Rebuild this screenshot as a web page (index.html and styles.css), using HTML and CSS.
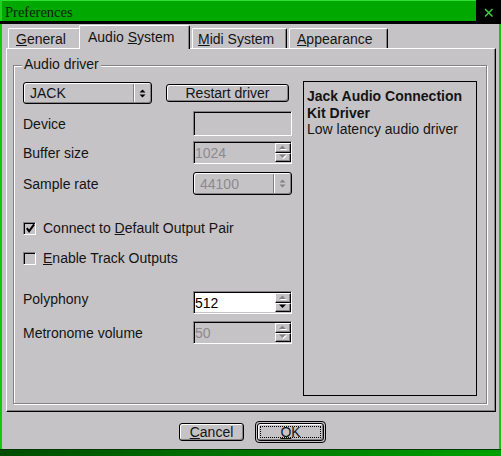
FILE: index.html
```html
<!DOCTYPE html>
<html>
<head>
<meta charset="utf-8">
<title>Preferences</title>
<link rel="stylesheet" href="styles.css">
</head>
<body>
<div class="window">
  <div class="titlebar">
    <div class="title">Preferences</div>
    <div class="close">
      <svg width="25" height="21" viewBox="0 0 25 21"><path d="M9 9 L16.5 16.5 M16.5 9 L9 16.5" stroke="#3fd03f" stroke-width="1.5" fill="none"/></svg>
    </div>
  </div>
  <div class="body">
    <div class="tabs">
      <div class="tab tab-general"><u>G</u>eneral</div>
      <div class="tab tab-audio selected">Audio <u>S</u>ystem</div>
      <div class="tab tab-midi"><u>M</u>idi System</div>
      <div class="tab tab-appearance"><u>A</u>ppearance</div>
    </div>
    <div class="pane">
      <div class="group">
        <div class="legend">Audio driver</div>
        <div class="form">
          <div class="left">
            <div class="row row-driver">
              <div class="combo combo-driver">
                <span class="combo-text">JACK</span>
                <span class="combo-btn">
                  <svg width="7" height="9" viewBox="0 0 7 9"><polygon points="0.5,3.5 3.5,0.5 6.5,3.5" fill="#000"/><polygon points="0.5,5.5 3.5,8.5 6.5,5.5" fill="#000"/></svg>
                </span>
              </div>
              <div class="btn btn-restart">Restart driver</div>
            </div>
            <div class="row row-device">
              <span class="label">Device</span>
              <div class="field"></div>
            </div>
            <div class="row row-buffer">
              <span class="label">Buffer size</span>
              <div class="spin">
                <span class="spin-text dim">1024</span>
                <span class="spin-btns">
                  <span class="spin-btn"><svg width="9" height="6" viewBox="0 0 9 6"><polygon points="1,5 4.5,1.5 8,5" fill="#fff"/><polygon points="0,4 3.5,0.5 7,4" fill="#848284"/></svg></span>
                  <span class="spin-btn"><svg width="9" height="6" viewBox="0 0 9 6"><polygon points="1,1.5 4.5,5 8,1.5" fill="#fff"/><polygon points="0,0.5 3.5,4 7,0.5" fill="#848284"/></svg></span>
                </span>
              </div>
            </div>
            <div class="row row-sample">
              <span class="label">Sample rate</span>
              <div class="combo combo-sample">
                <span class="combo-text dim">44100</span>
                <span class="combo-btn">
                  <svg width="7" height="9" viewBox="0 0 7 9"><polygon points="0.5,3.5 3.5,0.5 6.5,3.5" fill="#848284"/><polygon points="0.5,5.5 3.5,8.5 6.5,5.5" fill="#848284"/></svg>
                </span>
              </div>
            </div>
            <div class="check-row row-connect">
              <span class="checkbox"><svg width="11" height="11" viewBox="0 0 11 11"><polyline points="2,5 4.5,8.5 10,1" fill="none" stroke="#000" stroke-width="2.2"/></svg></span>
              <span>Connect to <u>D</u>efault Output Pair</span>
            </div>
            <div class="check-row row-enable">
              <span class="checkbox"></span>
              <span><u>E</u>nable Track Outputs</span>
            </div>
            <div class="row row-poly">
              <span class="label">Polyphony</span>
              <div class="spin">
                <span class="spin-text white">512</span>
                <span class="spin-btns">
                  <span class="spin-btn"><svg width="9" height="6" viewBox="0 0 9 6"><polygon points="1,5 4.5,1.5 8,5" fill="#fff"/><polygon points="0,4 3.5,0.5 7,4" fill="#848284"/></svg></span>
                  <span class="spin-btn"><svg width="9" height="6" viewBox="0 0 9 6"><polygon points="0,0.5 3.5,4 7,0.5" fill="#000"/></svg></span>
                </span>
              </div>
            </div>
            <div class="row row-metro">
              <span class="label">Metronome volume</span>
              <div class="spin">
                <span class="spin-text dim">50</span>
                <span class="spin-btns">
                  <span class="spin-btn"><svg width="9" height="6" viewBox="0 0 9 6"><polygon points="1,5 4.5,1.5 8,5" fill="#fff"/><polygon points="0,4 3.5,0.5 7,4" fill="#848284"/></svg></span>
                  <span class="spin-btn"><svg width="9" height="6" viewBox="0 0 9 6"><polygon points="1,1.5 4.5,5 8,1.5" fill="#fff"/><polygon points="0,0.5 3.5,4 7,0.5" fill="#848284"/></svg></span>
                </span>
              </div>
            </div>
          </div>
          <div class="panel">
            <div class="panel-title">Jack Audio Connection Kit Driver</div>
            <div>Low latency audio driver</div>
          </div>
        </div>
      </div>
    </div>
    <div class="buttons">
      <div class="btn btn-cancel"><u>C</u>ancel</div>
      <div class="default-frame">
        <div class="btn btn-ok"><span class="focus"><u>O</u>K</span></div>
      </div>
    </div>
  </div>
  <div class="bottom-band"></div>
</div>
</body>
</html>
```

FILE: styles.css
```css
* {
  box-sizing: border-box;
}

html,
body {
  margin: 0;
  padding: 0;
}

body {
  width: 501px;
  height: 456px;
  overflow: hidden;
  background: #000;
  font-family: "Liberation Sans", Arial, sans-serif;
  font-size: 14px;
  line-height: 16px;
  color: #141414;
}

u {
  text-decoration: underline;
  text-underline-offset: 1px;
}

.window {
  width: 501px;
  height: 456px;
  display: flex;
  flex-direction: column;
  background: #c6c3c6;
}

/* title bar */
.titlebar {
  display: flex;
  height: 24px;
  background: #000;
  border-bottom: 3px solid #000;
}

.title {
  width: 476px;
  height: 21px;
  background: #00a800;
  border-top: 1px solid #30e030;
  border-left: 2px solid #20d020;
  padding: 2px 0 0 3px;
  font-family: "Liberation Serif", "Times New Roman", serif;
  font-size: 14.5px;
  line-height: 18px;
  color: #0c1c0c;
}

.close {
  width: 25px;
  height: 21px;
  display: flex;
}

/* body */
.body {
  flex: 1;
  display: flex;
  flex-direction: column;
  border-left: 2px solid #10c810;
  border-right: 2px solid #10c810;
  padding: 0 3px 0 4px;
}

/* tabs */
.tabs {
  display: flex;
  align-items: flex-end;
  height: 24px;
  margin-top: 1px;
  margin-bottom: -1px;
  padding-left: 2px;
}

.tab {
  height: 20px;
  margin-bottom: 1px;
  border-top: 1px solid #fff;
  border-left: 1px solid #fff;
  border-right: 1px solid #000;
  box-shadow: inset -1px 0 #848284;
  border-radius: 2px 2px 0 0;
  padding-top: 2px;
  white-space: nowrap;
  background: #c6c3c6;
}

.tab-general {
  width: 73px;
  padding-left: 7px;
}

.tab-audio {
  width: 111px;
  padding-left: 8px;
}

.tab-midi {
  width: 95px;
  margin-left: 2px;
  padding-left: 5px;
}

.tab-appearance {
  width: 99px;
  margin-left: 2px;
  padding-left: 7px;
}

.tab.selected {
  height: 24px;
  margin-bottom: 0;
  margin-left: -2px;
  padding-top: 3px;
  position: relative;
  z-index: 2;
}

/* pane */
.pane {
  height: 364px;
  border: 1px solid;
  border-color: #fff #000 #000 #fff;
  box-shadow: inset -1px -1px #848284;
  display: flex;
  flex-direction: column;
  padding: 16px 8px 7px 6px;
}

.group {
  flex: 1;
  display: flex;
  flex-direction: column;
  border: 1px solid #848284;
  box-shadow: inset 1px 1px #fff, 1px 1px #fff;
  padding: 0 9px 7px 9px;
}

.legend {
  align-self: flex-start;
  margin: -10px 0 0 -1px;
  padding: 0 2px;
  background: #c6c3c6;
}

.form {
  margin-top: 9px;
  display: grid;
  grid-template-columns: 269px 174px;
  column-gap: 11px;
  height: 315px;
}

.left {
  display: flex;
  flex-direction: column;
  padding-top: 1px;
}

.row {
  display: flex;
  align-items: center;
  height: 23px;
}

.label {
  flex: 1;
}

.row-driver {
  height: 22px;
  gap: 14px;
}

.row-device {
  height: 25px;
  margin-top: 7px;
}

.row-buffer {
  margin-top: 5px;
}

.row-sample {
  margin-top: 8px;
}

.row-poly {
  margin-top: 25px;
}

.row-poly .label {
  margin-bottom: 8px;
}

.row-metro {
  margin-top: 7px;
}

/* combo box */
.combo {
  display: flex;
  height: 100%;
  border: 1px solid #000;
  border-radius: 3px;
  box-shadow: inset 1px 1px #fff, inset -1px -1px #848284;
  background: #c6c3c6;
}

.combo-driver {
  width: 129px;
}

.combo-sample {
  width: 99px;
}

.combo-text {
  flex: 1;
  display: flex;
  align-items: center;
  padding-left: 6px;
}

.combo-btn {
  width: 17px;
  display: flex;
  align-items: center;
  justify-content: center;
  border-left: 1px solid #848284;
  box-shadow: inset 1px 0 #fff;
  margin: 1px 1px 1px 0;
  padding-left: 1px;
}

.dim {
  color: #8c8a8c;
}

/* push buttons */
.btn {
  display: flex;
  align-items: center;
  justify-content: center;
  height: 18px;
  border: 1px solid #000;
  border-radius: 3px;
  box-shadow: inset 1px 1px #fff, inset -1px -1px #848284;
  background: #c6c3c6;
  white-space: nowrap;
}

.btn-restart {
  width: 123px;
}

/* line edit */
.field {
  width: 99px;
  height: 100%;
  border: 1px solid;
  border-color: #848284 #fff #fff #848284;
  box-shadow: inset 1px 1px #000;
}

/* spin box */
.spin {
  width: 99px;
  height: 100%;
  display: flex;
  border: 1px solid;
  border-color: #848284 #fff #fff #848284;
  box-shadow: inset 1px 1px #000;
  padding: 1px 0 1px 1px;
}

.spin-text {
  flex: 1;
  display: flex;
  align-items: center;
  padding-left: 0;
}

.spin-text.white {
  background: #fff;
  color: #000;
}

.spin-btns {
  width: 16px;
  display: flex;
  flex-direction: column;
}

.spin-btn {
  flex: 1;
  display: flex;
  align-items: center;
  justify-content: center;
  border: 1px solid;
  border-color: #fff #000 #000 #fff;
  box-shadow: inset -1px -1px #848284;
  background: #c6c3c6;
}

/* check boxes */
.check-row {
  display: flex;
  align-items: center;
  gap: 7px;
  height: 16px;
}

.row-connect {
  margin-top: 25px;
}

.row-enable {
  margin-top: 14px;
}

.checkbox {
  width: 13px;
  height: 13px;
  display: flex;
  align-items: center;
  justify-content: center;
  border: 1px solid;
  border-color: #848284 #fff #fff #848284;
  box-shadow: inset 1px 1px #000;
  padding: 1px 0 0 1px;
}

/* description panel */
.panel {
  border: 1px solid #000;
  padding: 6px 3px;
  line-height: 16.5px;
}

.panel-title {
  font-weight: bold;
}

/* dialog buttons */
.buttons {
  display: flex;
  justify-content: center;
  align-items: center;
  gap: 11px;
  padding: 9px 0 0 3px;
}

.btn-cancel {
  width: 65px;
}

.default-frame {
  width: 71px;
  height: 22px;
  border: 1px solid #000;
  border-radius: 4px;
  padding: 1px;
}

.btn-ok {
  width: 100%;
}

.focus {
  display: flex;
  align-items: center;
  justify-content: center;
  width: 61px;
  height: 12px;
  line-height: 12px;
  border: 1px dotted #000;
}

.bottom-band {
  height: 7px;
  background: linear-gradient(90deg, #004c00, #00a000);
  border-top: 1px solid #003800;
}
```
